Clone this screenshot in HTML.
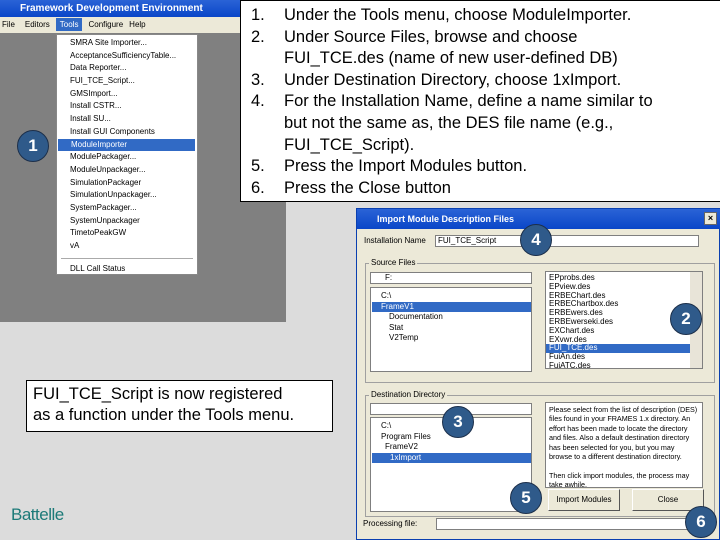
<!DOCTYPE html>
<html><head><style>
*{margin:0;padding:0;box-sizing:border-box}
body{width:720px;height:540px;position:relative;overflow:hidden;background:#dcdcdc;font-family:"Liberation Sans",sans-serif}
.a{position:absolute}
.t{font-size:8px;color:#000;white-space:nowrap}
.circ{position:absolute;width:32px;height:32px;border-radius:50%;background:#2f5a8a;border:1px solid #1c2f4a;color:#fff;font-weight:bold;font-size:17px;text-align:center;line-height:30px}
.menu div{height:12.7px;padding-left:13px;font-size:8px;line-height:12.7px}
.box{position:absolute;background:#fff;border:1px solid #7f7f7f;overflow:hidden}
.grp{position:absolute;border:1px solid #a0a0a0}
.btn{position:absolute;background:#ece9d8;border:1px solid #555;border-top-color:#fff;border-left-color:#fff;font-size:8px;text-align:center;line-height:20px}
.sel{background:#316ac5;color:#fff}
</style></head><body>
<div class="a" style="left:0;top:0;width:286px;height:322px;background:#808080"></div>
<div class="a" style="left:0;top:0;width:286px;height:17px;background:linear-gradient(#2a63d6,#0a46c8);color:#fff;font-weight:bold;font-size:10px;line-height:17px;padding-left:20px">Framework Development Environment</div>
<div class="a" style="left:0;top:17px;width:286px;height:16px;background:#ece9d8;font-size:8px;line-height:16px">
<span style="margin-left:2px">File</span><span style="margin-left:10px">Editors</span><span style="margin-left:6px;background:#316ac5;color:#fff;padding:2px 4px">Tools</span><span style="margin-left:6px">Configure</span><span style="margin-left:6px">Help</span></div>
<div class="a menu" style="left:56px;top:34px;width:142px;height:241px;background:#fff;border:1px solid #888;padding-top:2px">
<div>SMRA Site Importer...</div><div>AcceptanceSufficiencyTable...</div><div>Data Reporter...</div><div>FUI_TCE_Script...</div><div>GMSImport...</div><div>Install CSTR...</div><div>Install SU...</div><div>Install GUI Components</div>
<div class="sel" style="margin:0 2px 0 1px">ModuleImporter</div>
<div>ModulePackager...</div><div>ModuleUnpackager...</div><div>SimulationPackager</div><div>SimulationUnpackager...</div><div>SystemPackager...</div><div>SystemUnpackager</div><div>TimetoPeakGW</div><div>vA</div>
<div style="height:6px;border-bottom:1px solid #aaa;margin:0 4px 4px"></div><div>DLL Call Status</div></div>
<div class="circ" style="left:17px;top:130px">1</div>
<div class="a" style="left:240px;top:0;width:490px;height:202px;background:#fff;border:1px solid #000;font-size:16.5px;line-height:21.6px">
<div style="position:absolute;left:10px;top:4px">1.<br>2.<br><br>3.<br>4.<br><br><br>5.<br>6.</div>
<div style="position:absolute;left:43px;top:4px;white-space:nowrap">Under the Tools menu, choose ModuleImporter.<br>Under Source Files, browse and choose<br>FUI_TCE.des (name of new user-defined DB)<br>Under Destination Directory, choose 1xImport.<br>For the Installation Name, define a name similar to<br>but not the same as, the DES file name (e.g.,<br>FUI_TCE_Script).<br>Press the Import Modules button.<br>Press the Close button</div></div>
<div class="a" style="left:26px;top:380px;width:307px;height:52px;background:#fff;border:1px solid #000;font-size:16.5px;line-height:21px;padding:3px 0 0 6px;white-space:nowrap">FUI_TCE_Script is now registered<br>as a function under the Tools menu.</div>
<div class="a" style="left:11px;top:505px;color:#1c7a78;font-size:17px;letter-spacing:-0.5px">Battelle</div>
<div class="a" style="left:356px;top:208px;width:364px;height:332px;background:#ece9d8;border:1px solid #0a3fb0">
<div class="a" style="left:0;top:0;width:363px;height:20px;background:linear-gradient(#2a63d6,#0a46c8);color:#fff;font-weight:bold;font-size:9px;line-height:20px;padding-left:20px">Import Module Description Files</div>
<div class="a" style="left:347px;top:3px;width:13px;height:13px;background:#ece9d8;border:1px solid #666;font-size:9px;text-align:center;line-height:11px;font-weight:bold">×</div>
<div class="a t" style="left:7px;top:27px">Installation Name</div>
<div class="box" style="left:78px;top:26px;width:264px;height:12px;font-size:8px;line-height:10px;padding-left:2px">FUI_TCE_Script</div>
<div class="grp" style="left:8px;top:54px;width:350px;height:120px"></div>
<div class="a t" style="left:12px;top:49px;background:#ece9d8;padding:0 2px">Source Files</div>
<div class="box" style="left:13px;top:63px;width:162px;height:12px;font-size:8px;line-height:10px;padding-left:14px">F:</div>
<div class="box" style="left:13px;top:78px;width:162px;height:85px;font-size:8px;line-height:10.5px;padding:3px 0 0 10px"><div>C:\</div><div class="sel" style="margin-left:-9px;padding-left:9px;width:161px">FrameV1</div><div style="padding-left:8px">Documentation</div><div style="padding-left:8px">Stat</div><div style="padding-left:8px">V2Temp</div></div>
<div class="box" style="left:188px;top:62px;width:158px;height:98px;font-size:8px;line-height:8.8px;padding:2px 0 0 3px"><div>EPprobs.des</div><div>EPview.des</div><div>ERBEChart.des</div><div>ERBEChartbox.des</div><div>ERBEwers.des</div><div>ERBEwerseki.des</div><div>EXChart.des</div><div>EXvwr.des</div><div class="sel" style="margin-left:-3px;padding-left:3px;width:148px">FUI_TCE.des</div><div>FuiAn.des</div><div>FuiATC.des</div></div>
<div class="a" style="left:333px;top:63px;width:12px;height:96px;background:#e8e4d8"></div>
<div class="grp" style="left:8px;top:186px;width:350px;height:122px"></div>
<div class="a t" style="left:12px;top:181px;background:#ece9d8;padding:0 2px">Destination Directory</div>
<div class="box" style="left:13px;top:194px;width:162px;height:12px"></div>
<div class="box" style="left:13px;top:208px;width:162px;height:95px;font-size:8px;line-height:10.5px;padding:3px 0 0 10px"><div>C:\</div><div>Program Files</div><div style="padding-left:4px">FrameV2</div><div class="sel" style="margin-left:-9px;padding-left:18px;width:161px">1xImport</div></div>
<div class="box" style="left:188px;top:193px;width:158px;height:86px;font-size:7.2px;line-height:9.4px;padding:2px 3px;white-space:normal">Please select from the list of description (DES) files found in your FRAMES 1.x directory. An effort has been made to locate the directory and files. Also a default destination directory has been selected for you, but you may browse to a different destination directory.<br><br>Then click import modules, the process may take awhile.</div>
<div class="btn" style="left:191px;top:280px;width:72px;height:22px">Import Modules</div>
<div class="btn" style="left:275px;top:280px;width:72px;height:22px">Close</div>
<div class="a t" style="left:6px;top:310px">Processing file:</div>
<div class="box" style="left:79px;top:309px;width:258px;height:12px"></div>
</div>
<div class="circ" style="left:520px;top:224px">4</div>
<div class="circ" style="left:670px;top:303px">2</div>
<div class="circ" style="left:442px;top:406px">3</div>
<div class="circ" style="left:510px;top:482px">5</div>
<div class="circ" style="left:685px;top:506px">6</div>
</body></html>
